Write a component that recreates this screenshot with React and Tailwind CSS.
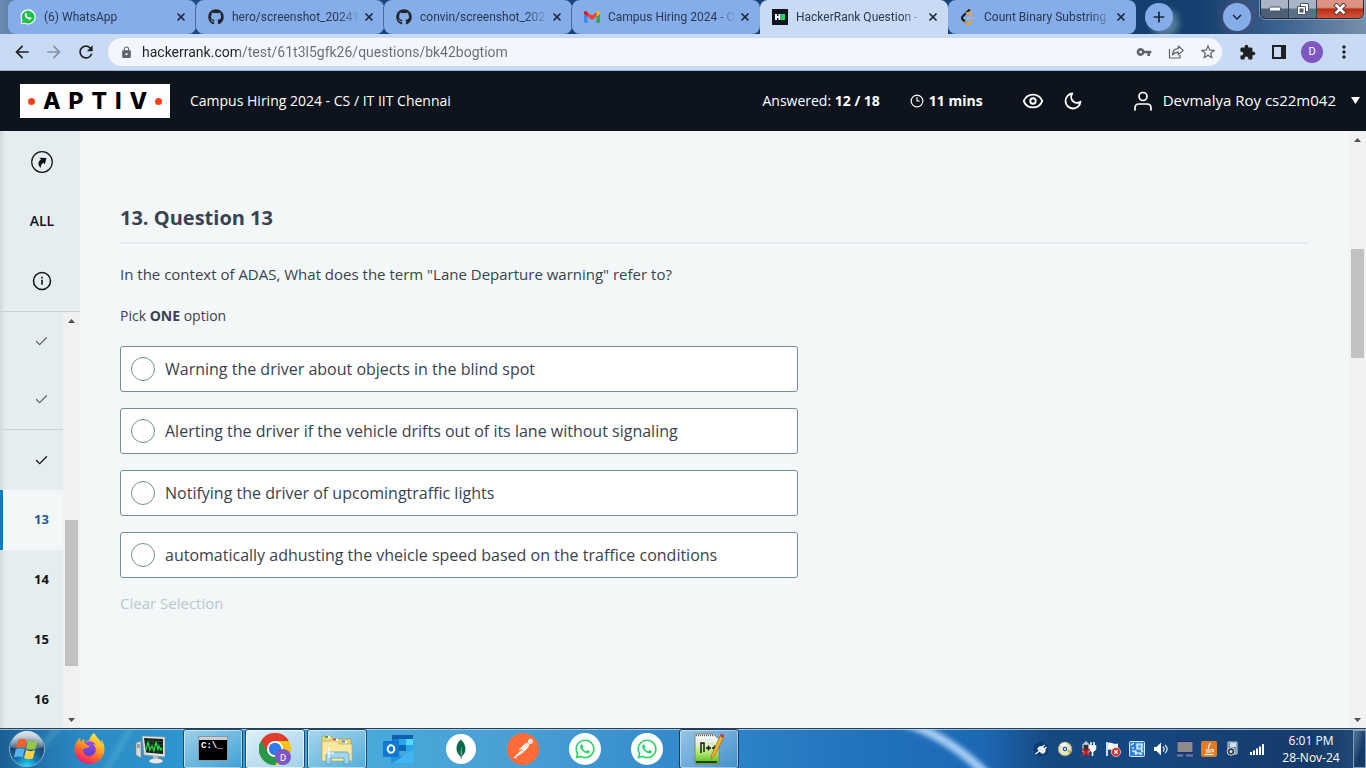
import React from 'react';
import { FaGithub, FaWhatsapp } from 'react-icons/fa';
import { MdArrowBack, MdArrowForward, MdRefresh, MdLock, MdVpnKey, MdExtension, MdStarOutline, MdMoreVert, MdKeyboardArrowDown } from 'react-icons/md';
import { SiMongodb, SiPostman, SiFirefoxbrowser } from 'react-icons/si';
import { X, Plus, Clock3, Eye, Check } from 'lucide-react';

/* ---------- favicons ---------- */

function WhatsAppFavicon() {
  return (
    <svg viewBox="0 0 16 16" className="size-4 shrink-0">
      <path d="M0.4 15.6 1.5 11.6A7.6 7.6 0 1 1 4.6 14.6Z" fill="#fff" />
      <path d="M1.8 14.3 2.6 11.3A6.4 6.4 0 1 1 4.8 13.5Z" fill="#1fbf4b" />
      <path d="M5.5 4.2c.5-.4 1-.2 1.200.3l.4 1c.1.400-.5.8-.5 1.100.5 1 1.300 1.700 2.300 2.200.4 0 .7-.8 1-.7l1.400.7c.3.200 0 1.100-.4 1.500-1 .8-2.400.3-3.600-.5C6 9 4.900 7.800 4.700 6.300c-.1-.9.3-1.700.8-2.100Z" fill="#fff" />
    </svg>
  );
}

function GmailFavicon() {
  return (
    <svg viewBox="0 0 16 12" className="w-4 h-3 shrink-0">
      <path d="M1 12h2.600V5.600L0 3v8a1 1 0 0 0 1 1Z" fill="#4285f4" />
      <path d="M12.400 12H15a1 1 0 0 0 1-1V3l-3.600 2.600Z" fill="#34a853" />
      <path d="M12.400 1.300v4.300L16 3V1.700c0-1.500-1.500-2.100-2.600-1.200Z" fill="#fbbc04" />
      <path d="M3.600 5.600V1.300L8 4.600l4.400-3.300v4.300L8 9Z" fill="#ea4335" />
      <path d="M0 1.700V3l3.600 2.600V1.300L2.600.5C1.500-.3 0 .2 0 1.700Z" fill="#c5221f" />
    </svg>
  );
}

function HackerRankFavicon() {
  return (
    <svg viewBox="0 0 16 16" className="size-4 shrink-0">
      <rect width="16" height="16" fill="#0e141e" />
      <path d="M3 5h2v2h1.500V5h2v6h-2V9H5v2H3Z" fill="#fff" />
      <rect x="9" y="5" width="4" height="6" fill="#05e05c" />
    </svg>
  );
}

function LeetCodeFavicon() {
  return (
    <svg viewBox="0 0 16 16" className="size-4 shrink-0" fill="none" strokeWidth="1.900" strokeLinecap="round">
      <path d="M9.200 1 2.800 7.300c-1 1-1 2.200 0 3.200l3 3" stroke="#111" />
      <path d="m5.200 12.900 1.200 1.200c1 1 2.600 1 3.600 0l1.500-1.400M6.500 4.200c1.200-.8 2.600-.6 3.500.2l1.600 1.400" stroke="#f9a11b" />
      <path d="M7 9.200h6.500" stroke="#b9b3a8" strokeWidth="1.400" />
    </svg>
  );
}

const tabs = [
  { title: '(6) WhatsApp', icon: <WhatsAppFavicon /> },
  { title: 'hero/screenshot_20241', icon: <FaGithub className="size-4 shrink-0 text-[#22272e]" /> },
  { title: 'convin/screenshot_202', icon: <FaGithub className="size-4 shrink-0 text-[#22272e]" /> },
  { title: 'Campus Hiring 2024 - C', icon: <GmailFavicon /> },
  { title: 'HackerRank Question -', icon: <HackerRankFavicon />, active: true },
  { title: 'Count Binary Substring', icon: <LeetCodeFavicon /> },
];

function Tab({ tab, divided }) {
  return (
    <div
      className={
        'flex h-[34px] w-[188px] min-w-0 items-center pl-3 ' +
        (tab.active ? 'rounded-t-lg bg-[#c9daf5]' : 'rounded-lg bg-[#85ade9]')
      }
    >
      {tab.icon}
      <span className="ml-2 min-w-0 flex-1 overflow-hidden whitespace-nowrap font-[Roboto,sans-serif] text-xs text-[#2a3850] [mask-image:linear-gradient(to_right,black_82%,transparent)]">
        {tab.title}
      </span>
      <div className="flex items-center gap-1.5">
        <button type="button" aria-label={'Close ' + tab.title} className="grid size-4 place-items-center text-[#202a38]">
          <X size={12} strokeWidth={3.500} />
        </button>
        <span className={'h-5 w-px ' + (divided ? 'bg-[#4c6a98]' : 'bg-transparent')} />
      </div>
    </div>
  );
}

function WindowControls() {
  return (
    <div className="flex h-[19px] w-[104px] overflow-hidden rounded-b-md border border-t-0 border-[#1c2c42] shadow-[0_0_0_1px_#b8c8da88]">
      <button type="button" aria-label="Minimize" className="grid w-7 place-items-center border-r border-[#2c3c52] bg-linear-to-b from-[#a9b5c4] from-45% to-[#4f6076] to-50%">
        <svg viewBox="0 0 12 6" className="h-[6px] w-3"><rect x=".5" y="1" width="11" height="4" rx="1" fill="#fff" stroke="#485568" /></svg>
      </button>
      <button type="button" aria-label="Restore" className="grid w-7 place-items-center border-r border-[#2c3c52] bg-linear-to-b from-[#a9b5c4] from-45% to-[#5a6f88] to-50%">
        <svg viewBox="0 0 12 12" className="size-3" fill="#fff" stroke="#485568">
          <rect x="3.500" y=".5" width="8" height="8" rx=".5" />
          <rect x=".5" y="3.500" width="8" height="8" rx=".5" />
          <rect x="3" y="6" width="3" height="3" fill="#5b6b80" />
        </svg>
      </button>
      <button type="button" aria-label="Close window" className="grid flex-1 place-items-center bg-linear-to-b from-[#dc9384] from-40% via-[#b92c12] via-50% to-[#d5543a]">
        <svg viewBox="0 0 14 12" className="h-3 w-[14px]" fill="none" strokeLinecap="square">
          <path d="m3.500 2.500 7 7m0-7-7 7" stroke="#57393c" strokeWidth="4.500" />
          <path d="m3.500 2.500 7 7m0-7-7 7" stroke="#fff" strokeWidth="2.600" />
        </svg>
      </button>
    </div>
  );
}

function TabStrip() {
  return (
    <div className="flex h-[34px] shrink-0 bg-linear-to-r from-[#6c8bb0] from-0% via-[#1b4c85] via-5% to-[#14406f] to-85%">
      <div className="flex flex-1 bg-[linear-gradient(to_right,transparent_88%,#3d6390_94%,#7790ac)] pl-2">
        {tabs.map((tab, i) => (
          <Tab key={tab.title} tab={tab} divided={i < 3} />
        ))}
        <button type="button" aria-label="New tab" className="mt-[3px] ml-[9px] grid size-7 shrink-0 place-items-center rounded-full bg-[#85ade9] text-[#1c2636] shadow-[6px_6px_6px_#8fb0c088]">
          <Plus size={16} strokeWidth={2.600} />
        </button>
        <div className="ml-auto flex gap-[9px] pr-0.5">
          <button type="button" aria-label="Search tabs" className="mt-[3px] grid size-7 place-items-center rounded-full bg-[#85ade9] text-[#1c2636] shadow-[0_0_10px_3px_#8a4a6855]">
            <MdKeyboardArrowDown size={18} />
          </button>
          <WindowControls />
        </div>
      </div>
    </div>
  );
}

function Toolbar() {
  return (
    <div className="flex h-[37px] shrink-0 items-center border-b border-[#9fb1cd] bg-[#c9daf5] px-3 text-[#202124]">
      <button type="button" aria-label="Back"><MdArrowBack size={20} /></button>
      <button type="button" aria-label="Forward" className="ml-3 text-[#8791a5]"><MdArrowForward size={20} /></button>
      <button type="button" aria-label="Reload" className="ml-3"><MdRefresh size={20} /></button>
      <div className="ml-3 flex h-7 flex-1 items-center rounded-full bg-[#f3f7fd] pl-3 pr-[5px] text-[#5f6368]">
        <MdLock size={13} />
        <input
          aria-label="Address"
          defaultValue="hackerrank.com/test/61t3l5gfk26/questions/bk42bogtiom"
          className="ml-[9px] min-w-0 flex-1 bg-[linear-gradient(to_right,#202124_97px,#686c72_97px)] bg-clip-text font-[Roboto,sans-serif] text-sm text-transparent outline-none"
        />
        <button type="button" aria-label="Passwords"><MdVpnKey size={16} /></button>
        <button type="button" aria-label="Share" className="ml-4">
          <svg viewBox="0 0 16 16" className="size-4" fill="none" stroke="currentColor" strokeWidth="1.200">
            <path d="M1.500 5v9h10.500v-3" />
            <path d="M4.500 11c.3-4 2.500-6.300 5.800-6.300V2l4.900 4.400-4.900 4.400V8.200c-2.600 0-4.300.8-5.800 2.800Z" strokeLinejoin="round" />
          </svg>
        </button>
        <button type="button" aria-label="Bookmark" className="ml-[15px]"><MdStarOutline size={18} /></button>
      </div>
      <button type="button" aria-label="Extensions" className="ml-[17px]"><MdExtension size={17} /></button>
      <button type="button" aria-label="Side panel" className="ml-4">
        <svg viewBox="0 0 14 14" className="size-[14px]"><path fillRule="evenodd" d="M0 0h14v14H0ZM2 2v10h7V2Z" fill="currentColor" /></svg>
      </button>
      <button type="button" className="ml-[15px] grid size-[22px] place-items-center rounded-full bg-[#7e57c2] font-[Roboto] text-[11px] text-white">D</button>
      <button type="button" aria-label="Menu" className="ml-[11px]"><MdMoreVert size={20} /></button>
    </div>
  );
}

/* ---------- test page ---------- */

function Logo() {
  return (
    <a href="#home" className="flex h-[34px] w-[150px] shrink-0 items-center justify-between bg-white px-2 font-[Inter] text-[23px] leading-none font-extrabold text-black">
      <span className="size-[7px] rounded-full bg-[#f84018]" />
      <span>A</span>
      <span>P</span>
      <span>T</span>
      <span>I</span>
      <span>V</span>
      <span className="size-[7px] rounded-full bg-[#f84018]" />
    </a>
  );
}

function TestHeader() {
  return (
    <header className="flex h-[60px] shrink-0 items-center bg-[#0e141e] pr-1.5 pl-5 text-sm text-white">
      <Logo />
      <h1 className="ml-5 whitespace-nowrap">Campus Hiring 2024 - CS / IT IIT Chennai</h1>
      <p className="ml-auto whitespace-nowrap">Answered: <b>12 / 18</b></p>
      <p className="ml-[30px] flex items-center gap-[5px] font-bold whitespace-nowrap">
        <Clock3 size={14} strokeWidth={2} />
        11 mins
      </p>
      <button type="button" aria-label="Preview" className="ml-[39px]"><Eye size={22} strokeWidth={2} /></button>
      <button type="button" aria-label="Dark mode" className="ml-[19px]">
        <svg viewBox="0 0 24 24" className="size-5" fill="none" stroke="currentColor" strokeWidth="2.200" strokeLinejoin="round">
          <path d="M21 12.790A9 9 0 1 1 11.210 3 7 7 0 0 0 21 12.790Z" />
        </svg>
      </button>
      <button type="button" className="ml-[51px] flex items-center gap-[11px] text-[15px]">
        <svg viewBox="0 0 18 20" className="h-5 w-[18px]" fill="none" stroke="currentColor" strokeWidth="1.700" strokeLinecap="round">
          <circle cx="9" cy="5.500" r="4" />
          <path d="M1 19v-2c0-2.500 1.500-4 4-4h8c2.500 0 4 1.500 4 4v2" />
        </svg>
        Devmalya Roy cs22m042
        <svg viewBox="0 0 9 7" className="ml-1 h-[7px] w-[9px]"><path d="M0 0h9L4.500 7Z" fill="currentColor" /></svg>
      </button>
    </header>
  );
}

function ScrollArrow({ down }) {
  return (
    <button type="button" aria-label={down ? 'Scroll down' : 'Scroll up'} className="grid h-[17px] w-full place-items-center text-[#505050]">
      <svg viewBox="0 0 7 4" className="h-1 w-[7px]"><path d={down ? 'M0 0h7L3.500 4Z' : 'M0 4h7L3.500 0Z'} fill="currentColor" /></svg>
    </button>
  );
}

function ScrollBar({ before, thumb, after }) {
  return (
    <div className="flex w-[17px] shrink-0 flex-col items-center bg-[#f1f1f1]">
      <ScrollArrow />
      <div style={{ flexGrow: before }} />
      <div className="w-[13px] bg-[#c1c1c1]" style={{ flexGrow: thumb }} />
      <div style={{ flexGrow: after }} />
      <ScrollArrow down />
    </div>
  );
}

const questions = [
  { id: 10, done: 'faded' },
  { id: 11, done: 'faded', sectionEnd: true },
  { id: 12, done: 'full' },
  { id: 13, current: true },
  { id: 14 },
  { id: 15 },
  { id: 16 },
];

function QuestionLink({ q }) {
  return (
    <a
      href={'#question-' + q.id}
      aria-label={'Question ' + q.id}
      className={
        'flex h-[60px] shrink-0 items-center justify-center border-l-[3px] pl-[17px] first:h-[58px] ' +
        (q.current ? 'border-l-[#097bbf] bg-[#f3f7f8] text-[#1b5c8e] ' : 'border-l-transparent text-[#0e141e] ') +
        (q.sectionEnd ? 'border-b border-b-[#c8d3d6]' : '')
      }
    >
      {q.done ? <Check size={15} strokeWidth={q.done === 'full' ? 2.200 : 1.800} className={q.done === 'full' ? '' : 'text-[#566068]'} /> : q.id}
    </a>
  );
}

function Sidebar() {
  return (
    <nav className="flex w-20 shrink-0 flex-col overflow-hidden bg-[#e6edef] text-[13px] font-bold text-[#0e141e] shadow-[inset_6px_0_6px_-6px_#b9c6ca]">
      <div className="border-b border-[#c8d3d6] pl-1">
        <a href="#summary" aria-label="Summary" className="grid h-[61px] place-items-center">
          <svg viewBox="0 0 22 22" className="size-[22px]">
            <circle cx="11" cy="11" r="10.300" fill="none" stroke="currentColor" strokeWidth="1.200" />
            <path d="M8.300 6.800 15.500 7l-1.700 6.600-1.500-1.900c-1.700 1.100-2.500 2.700-2.600 5.300-3.100-2.800-2.900-6.400.3-8.400Z" fill="currentColor" />
          </svg>
        </a>
        <a href="#all" className="grid h-[58px] place-items-center text-sm font-semibold">ALL</a>
        <a href="#info" aria-label="Information" className="grid h-[61px] place-items-center">
          <svg viewBox="0 0 20 20" className="size-5">
            <circle cx="10" cy="10" r="8.500" fill="none" stroke="currentColor" strokeWidth="1.500" />
            <path d="M9.200 5.800h1.600v1.600H9.200ZM9.200 8.800h1.600v5H9.200Z" fill="currentColor" />
          </svg>
        </a>
      </div>
      <div className="flex min-h-0 flex-1">
        <div className="flex min-w-0 flex-1 flex-col overflow-hidden">
          {questions.map((q) => <QuestionLink key={q.id} q={q} />)}
        </div>
        <ScrollBar before={191} thumb={146} after={45} />
      </div>
    </nav>
  );
}

const options = [
  'Warning the driver about objects in the blind spot',
  'Alerting the driver if the vehicle drifts out of its lane without signaling',
  'Notifying the driver of upcomingtraffic lights',
  'automatically adhusting the vheicle speed based on the traffice conditions',
];

function Question() {
  return (
    <main className="min-w-0 flex-1 overflow-hidden bg-[#f3f7f8] px-10 pt-[73px] text-[15px] text-[#39424e]">
      <h2 className="border-b-2 border-[#e6edef] pb-2.5 text-xl leading-7 font-bold">13. Question 13</h2>
      <p className="mt-5 leading-5">In the context of ADAS, What does the term "Lane Departure warning" refer to?</p>
      <fieldset className="mt-[22px]">
        <legend className="mb-5 text-sm leading-5">Pick <b>ONE</b> option</legend>
        <div className="flex max-w-[678px] flex-col gap-4">
          {options.map((text) => (
            <label key={text} className="flex h-[46px] items-center gap-2.5 rounded-[3px] border border-[#738f93] bg-white px-2.5 text-base">
              <input type="radio" name="answer" className="size-6 shrink-0 appearance-none rounded-full border border-[#738f93] bg-white checked:border-8" />
              {text}
            </label>
          ))}
        </div>
      </fieldset>
      <button type="button" className="mt-[15px] leading-5 text-[#b7c9cc]">Clear Selection</button>
    </main>
  );
}

/* ---------- taskbar ---------- */

function StartOrb() {
  return (
    <svg viewBox="0 0 38 38" className="size-[38px]">
      <defs>
        <radialGradient id="orb" cx=".5" cy="1" r=".9">
          <stop offset="0" stopColor="#1ee0ff" />
          <stop offset=".35" stopColor="#1478b4" />
          <stop offset=".75" stopColor="#1b4268" />
          <stop offset="1" stopColor="#7d99b0" />
        </radialGradient>
        <linearGradient id="orbShine" x2="0" y2="1">
          <stop offset="0" stopColor="#fff" stopOpacity=".75" />
          <stop offset="1" stopColor="#fff" stopOpacity=".15" />
        </linearGradient>
      </defs>
      <circle cx="19" cy="19" r="17.500" fill="url(#orb)" stroke="#7fb4d4" strokeWidth="1" />
      <path d="M3 17a16 16 0 0 1 32 0c-9 4-22 4-32 0Z" fill="url(#orbShine)" />
      <path d="M10 10c3-2 6-1.500 8.500-.2L16.800 18c-3-1.500-5.600-1.400-8.600 0Z" fill="#f0612a" />
      <path d="M20 10.400c3 1.400 6 1.600 9.500-.2l-2 8.200c-3 1.600-6 1.500-9.200.1Z" fill="#95c93f" />
      <path d="M7.800 19.500c3-1.500 5.800-1.400 8.700 0l-1.900 8c-2.800-1.500-5.600-1.500-8.600 0Z" fill="#55b5ee" />
      <path d="M18 20.100c3 1.400 6.100 1.400 9.100-.1l-2 8.200c-3 1.500-5.900 1.500-9-.1Z" fill="#fcd04b" />
    </svg>
  );
}

function FirefoxIcon() {
  return (
    <span className="relative grid size-8 place-items-center">
      <svg className="absolute size-0" aria-hidden="true">
        <linearGradient id="foxFill" x1=".8" y1="0" x2=".3" y2="1">
          <stop offset="0" stopColor="#fff44f" />
          <stop offset=".4" stopColor="#ffab1f" />
          <stop offset=".7" stopColor="#ff5a36" />
          <stop offset="1" stopColor="#e6157a" />
        </linearGradient>
      </svg>
      <span className="absolute size-4 rounded-full bg-linear-to-b from-[#9a4be8] to-[#5a3bd0]" />
      <SiFirefoxbrowser size={31} style={{ fill: 'url(#foxFill)' }} className="relative" />
    </span>
  );
}

function MonitorIcon() {
  return (
    <svg viewBox="0 0 32 32" className="size-8">
      <path d="M1 10l5-2v17l-5-3Z" fill="#d9dcda" stroke="#7c8482" strokeWidth=".6" />
      <path d="M2 12h3M2 14h3" stroke="#667" />
      <path d="M7 3 30 4v20L9 22Z" fill="#dfe3e2" stroke="#8b9392" strokeWidth=".7" />
      <path d="m9 5 19 1v15l-17-1.500Z" fill="#12221a" />
      <path d="m10 8 18 .7M10 11l18 .7M10 14l18 .7M11 17l17 .7M14 5v14M18 5v15M23 6v15" stroke="#3a5a48" strokeWidth=".5" />
      <path d="m11 17 2-8 2 8 2-4 2 5 2-9 2 8 1-4 2 4 1-2" fill="none" stroke="#1fe03a" strokeWidth="1.200" />
      <path d="m18 23 5 .5v4h-5Z" fill="#b9bfbd" />
      <ellipse cx="21" cy="28" rx="7" ry="2.500" fill="#e8ebea" stroke="#98a09e" strokeWidth=".6" />
    </svg>
  );
}

function TerminalIcon() {
  return (
    <span className="block h-[25px] w-[30px] border border-[#8d979f] bg-black font-['Liberation_Mono'] text-[9px] leading-[11px] text-white">
      <span className="block h-[3px] bg-[#c6cdd3]" />
      <span className="block pt-[1px] pl-[2px] text-left font-bold">C:\_</span>
    </span>
  );
}

function ChromeIcon() {
  return (
    <svg viewBox="0 0 32 32" className="size-8">
      <circle cx="16" cy="16" r="16" fill="#fbc116" />
      <path d="M16 16 2.100 8A16 16 0 0 1 29.900 8H16Z" fill="#e33b2e" />
      <path d="M2.100 8A16 16 0 0 0 16 32l7-12-7-4Z" fill="#269847" />
      <path d="M2.100 8 9 20l7-4V8Z" fill="#e33b2e" />
      <path d="M2.100 8A16 16 0 0 0 16 32l7-12-7 3-7-3Z" fill="#269847" />
      <circle cx="16" cy="16" r="8" fill="#fff" />
      <circle cx="16" cy="16" r="6.200" fill="#3079ee" />
      <circle cx="24" cy="24" r="8" fill="#7e57c2" />
      <text x="24" y="27.500" textAnchor="middle" fontFamily="Roboto" fontSize="9.500" fill="#fff">D</text>
    </svg>
  );
}

function FolderIcon() {
  return (
    <svg viewBox="0 0 34 32" className="h-8 w-[34px]">
      <path d="M2 3h9l2 3h18v20H2Z" fill="#ecd47a" stroke="#b79b45" strokeWidth=".7" />
      <path d="M5 4h5M13 7h5M22 9h5" stroke="#fff" strokeWidth="2.500" />
      <path d="M5 4h3" stroke="#2cba35" strokeWidth="2" />
      <path d="M13 6.500h3" stroke="#d4472e" strokeWidth="2" />
      <path d="M22 8.500h3" stroke="#2b8fdb" strokeWidth="2" />
      <path d="M2 8h14l3 3h13v17H2Z" fill="#f8e9a0" stroke="#c5a84f" strokeWidth=".7" />
      <path d="M6 31V22c0-2 1-3 3-3h17c2 0 3 1 3 3v9h-5v-6H11v6Z" fill="#9bd3ef" stroke="#4e9fc8" strokeWidth=".8" fillOpacity=".9" />
      <path d="M9 14v11M4 20h10" stroke="#fff" strokeWidth="1.200" />
    </svg>
  );
}

function OutlookIcon() {
  return (
    <svg viewBox="0 0 32 30" className="h-[30px] w-8">
      <path d="M9 1h21v16H9Z" fill="#0f5fae" />
      <path d="M9 5h7v6H9Z" fill="#1a78c8" /><path d="M16 5h7v6h-7Z" fill="#28a8ea" /><path d="M23 5h7v6h-7Z" fill="#50d9ff" />
      <path d="M16 11h7v6h-7Z" fill="#0c68b8" /><path d="M23 11h7v6h-7Z" fill="#28a8ea" />
      <path d="M8 16l12 7 11-8v13a1.500 1.500 0 0 1-1.500 1.500H9.500A1.500 1.500 0 0 1 8 28Z" fill="#1f93e0" />
      <path d="M31 15 9 29.500h20.500A1.500 1.500 0 0 0 31 28Z" fill="#40b5f2" />
      <rect y="7" width="16" height="16" rx="1.300" fill="#0f78d4" />
      <ellipse cx="8" cy="15" rx="3.300" ry="3.700" fill="none" stroke="#fff" strokeWidth="2" />
    </svg>
  );
}

function NotepadIcon() {
  return (
    <svg viewBox="0 0 32 32" className="size-8">
      <defs>
        <linearGradient id="noteFill" x2="0" y2="1"><stop offset=".2" stopColor="#f8fbf4" /><stop offset=".6" stopColor="#b8e878" /><stop offset="1" stopColor="#4fbc10" /></linearGradient>
      </defs>
      <path d="M2 1h18l6 5v25H2Z" fill="url(#noteFill)" stroke="#8a7f70" />
      <path d="M3 2.500h17" stroke="#555" strokeDasharray="1 1" strokeWidth="1.500" />
      <path d="M4 7h18M4 10h18" stroke="#bfd2dc" strokeWidth=".7" />
      <path d="M3 28h21v2H3Z" fill="#17480a" />
      <path d="M8 20V10h3v9M13 15h5M15.500 12.500v5M19 15h5M21.500 12.500v5" fill="none" stroke="#111" strokeWidth="1.400" />
      <path d="m19 21 8-18 3.500 1.800L21.500 23l-3.500 3Z" fill="#f0b22e" stroke="#96641c" strokeWidth=".7" />
      <path d="m27 3 1-2.500 3.500 1.800-1 2.500Z" fill="#b7404c" />
    </svg>
  );
}

function WhatsAppDisc() {
  return (
    <span className="grid size-8 place-items-center rounded-full bg-white text-[#25d366]">
      <FaWhatsapp size={22} />
    </span>
  );
}

const apps = [
  { name: 'Firefox', icon: <FirefoxIcon /> },
  { name: 'System monitor', icon: <MonitorIcon /> },
  { name: 'Command prompt', icon: <TerminalIcon />, state: 'open' },
  { name: 'Chrome', icon: <ChromeIcon />, state: 'focused' },
  { name: 'Explorer', icon: <FolderIcon />, state: 'open' },
  { name: 'Outlook', icon: <OutlookIcon /> },
  { name: 'MongoDB', icon: <span className="grid size-[30px] place-items-center rounded-full bg-white text-[#0a6b4a]"><SiMongodb size={20} /></span> },
  { name: 'Postman', icon: <span className="grid size-8 place-items-center rounded-full bg-[radial-gradient(circle,#fff_65%,transparent_66%)] text-[#ff6c37]"><SiPostman size={32} /></span> },
  { name: 'WhatsApp', icon: <WhatsAppDisc /> },
  { name: 'WhatsApp Beta', icon: <WhatsAppDisc /> },
  { name: 'Notepad++', icon: <NotepadIcon />, state: 'dim' },
];

function AppButton({ app }) {
  let look = 'border-transparent';
  if (app.state === 'open') look = 'border-[#1c4a72] bg-linear-to-br from-white/55 to-white/5 shadow-[inset_0_0_0_1px_#ffffff80]';
  if (app.state === 'dim') look = 'border-[#1c3a62] bg-linear-to-br from-white/50 to-white/10 shadow-[inset_0_0_0_1px_#ffffff70]';
  if (app.state === 'focused') look = 'border-[#1c4a72] bg-linear-to-br from-white/85 to-white/50 shadow-[inset_0_0_0_1px_#ffffffb0]';
  return (
    <button type="button" aria-label={app.name} className={'grid h-10 w-[60px] shrink-0 place-items-center rounded-[3px] border ' + look}>
      {app.icon}
    </button>
  );
}

const trayIcons = [
  ['Tools', <><path d="M8 0l7 4v8l-7 4-7-4V4Z" fill="#0c3a72" /><path d="m2.500 13 4-3M5 8l4 4c2 0 3-1 3-3L9 6C7 5.500 5.500 6 5 8ZM8.500 7l3-3M10.500 9l3-3" stroke="#fff" strokeWidth="1.300" fill="#dfe9f5" /></>],
  ['Disc', <><circle cx="8" cy="8" r="6.800" fill="#e5e0bd" stroke="#a7a274" /><path d="M8 8 3 3.500A7 7 0 0 1 9 1.500Z" fill="#f8f8f0" /><path d="m8 8 5 5a7 7 0 0 0 1.500-3Z" fill="#cdb03c" /><circle cx="8" cy="8" r="3" fill="#2e5f9e" stroke="#fff" /><circle cx="8" cy="8" r="1" fill="#fff" /></>],
  ['Power', <><path d="M2 3h6v8H2ZM4 1h2v2H4Z" fill="#333" stroke="#eee" strokeWidth="1" /><path d="M10 1v4M13 1v4M8.500 5h6v3l-2 2h-2l-2-2ZM11.500 10v5" stroke="#fff" strokeWidth="1.500" fill="#fff" /><path d="m1.500 8 7 6.500m0-6.500-7 6.500" stroke="#e41919" strokeWidth="2.200" /></>],
  ['Action center', <><path d="M2 1v14" stroke="#fff" strokeWidth="1.600" /><path d="M3 2c3-1.500 5 2 10 .5v7C9 11 6 7.500 3 9Z" fill="#f3f5f7" /><circle cx="11" cy="11" r="4.600" fill="#d6302b" stroke="#fff" strokeWidth=".6" /><path d="m9.300 9.300 3.400 3.400m0-3.400-3.400 3.400" stroke="#fff" strokeWidth="1.300" /></>],
  ['Graphics', <><rect x=".5" y=".5" width="15" height="15" rx="1" fill="#2c83d6" stroke="#d6e9fa" /><path d="M2 4 5 2M3 7h2M8 3h5v5H8ZM3 10h4v4M6 12h6v2M12 9l2 2" stroke="#fff" strokeWidth="1.200" fill="#61b4ef" /></>],
  ['Volume', <><path d="M1 6h2.500L8 1.500v13L3.500 10H1Z" fill="#fff" /><path d="M10 5.500c1.300 1.500 1.300 3.500 0 5M12.200 3.800c2.300 2.600 2.300 5.800 0 8.400" fill="none" stroke="#e3ebf4" strokeWidth="1.200" /></>],
  ['Display', <><path d="M0 .5h16v11H0Z" fill="#8b8b8b" stroke="#24247a" /><path d="M0 14.500h6M9 14.500h7" stroke="#7c7c96" strokeWidth="2" /></>],
  ['Java', <><rect width="16" height="16" rx="2" fill="#e27a22" /><path d="M8.500 2c2 2-3 3-.5 5.500M4.500 9h6M10.500 8.500c2.500-.5 2.500 2 0 2.500M5 11h5M3.500 13.500h9" fill="none" stroke="#fff" strokeWidth="1.200" /></>],
  ['Audio manager', <><path d="M3 1h9v12H3Z" fill="#6b8cab" stroke="#c3d3e2" /><path d="M5 2h6v4H5Z" fill="#cfe0ee" /><circle cx="6" cy="10.500" r="3.800" fill="#32383f" stroke="#d8dde2" /><circle cx="6" cy="10.500" r="1.500" fill="#d8dde2" /></>],
  ['Network', <path d="M1 11h2v3H1ZM4 9.500h2V14H4ZM7 7.500h2V14H7ZM10 5.500h2V14h-2ZM13 3h2v11h-2Z" fill="#fff" />],
];

function Taskbar() {
  return (
    <footer className="relative flex h-10 shrink-0 items-center border-t border-[#26405c] bg-[linear-gradient(to_right,#1c5f96_0%,#2b8ac4_6%,#2d97cf_14%,#48aadb_26%,#4a9fd4_38%,#2f86c8_52%,#2171bc_64%,#1d68b4_72%,#15487f_77%,#164780_84%,#153a68_96%,#244d78_100%)] text-white">
      <svg viewBox="0 0 1366 40" preserveAspectRatio="none" className="absolute inset-0 size-full" aria-hidden="true">
        <defs>
          <filter id="soft" x="-20%" y="-50%" width="140%" height="200%"><feGaussianBlur stdDeviation="2.500" /></filter>
        </defs>
        <path d="M900-8C935 2 963 22 988 48" fill="none" stroke="#a5cdf5" strokeWidth="9" filter="url(#soft)" />
        <path d="M60-2 20 42M132-2l-26 44" stroke="#7fd0d8" strokeOpacity=".3" strokeWidth="5" filter="url(#soft)" />
        <path d="M0 .5h1366" stroke="#bcd6ee" strokeOpacity=".8" />
      </svg>
      <button type="button" aria-label="Start" className="relative ml-2"><StartOrb /></button>
      <div className="relative ml-[13px] flex gap-0.5">
        {apps.map((app) => <AppButton key={app.name} app={app} />)}
      </div>
      <div className="relative ml-auto flex items-center">
        <div className="flex gap-2">
          {trayIcons.map(([name, drawing]) => (
            <svg key={name} viewBox="0 0 16 16" className="size-4" role="img" aria-label={name}>{drawing}</svg>
          ))}
        </div>
        <p className="ml-4 w-[60px] text-center text-xs leading-[17px] whitespace-nowrap">6:01 PM<br />28-Nov-24</p>
        <button type="button" aria-label="Show desktop" className="ml-3 h-[38px] w-[13px] border border-[#7f9bb8] bg-linear-to-br from-[#56789c] to-[#143a66] to-60%" />
      </div>
    </footer>
  );
}

export default function App() {
  return (
    <div className="flex h-screen flex-col overflow-hidden font-['Open_Sans','Noto_Sans',sans-serif]">
      <TabStrip />
      <Toolbar />
      <TestHeader />
      <div className="flex min-h-0 flex-1">
        <Sidebar />
        <Question />
        <ScrollBar before={101} thumb={109} after={353} />
      </div>
      <Taskbar />
    </div>
  );
}
